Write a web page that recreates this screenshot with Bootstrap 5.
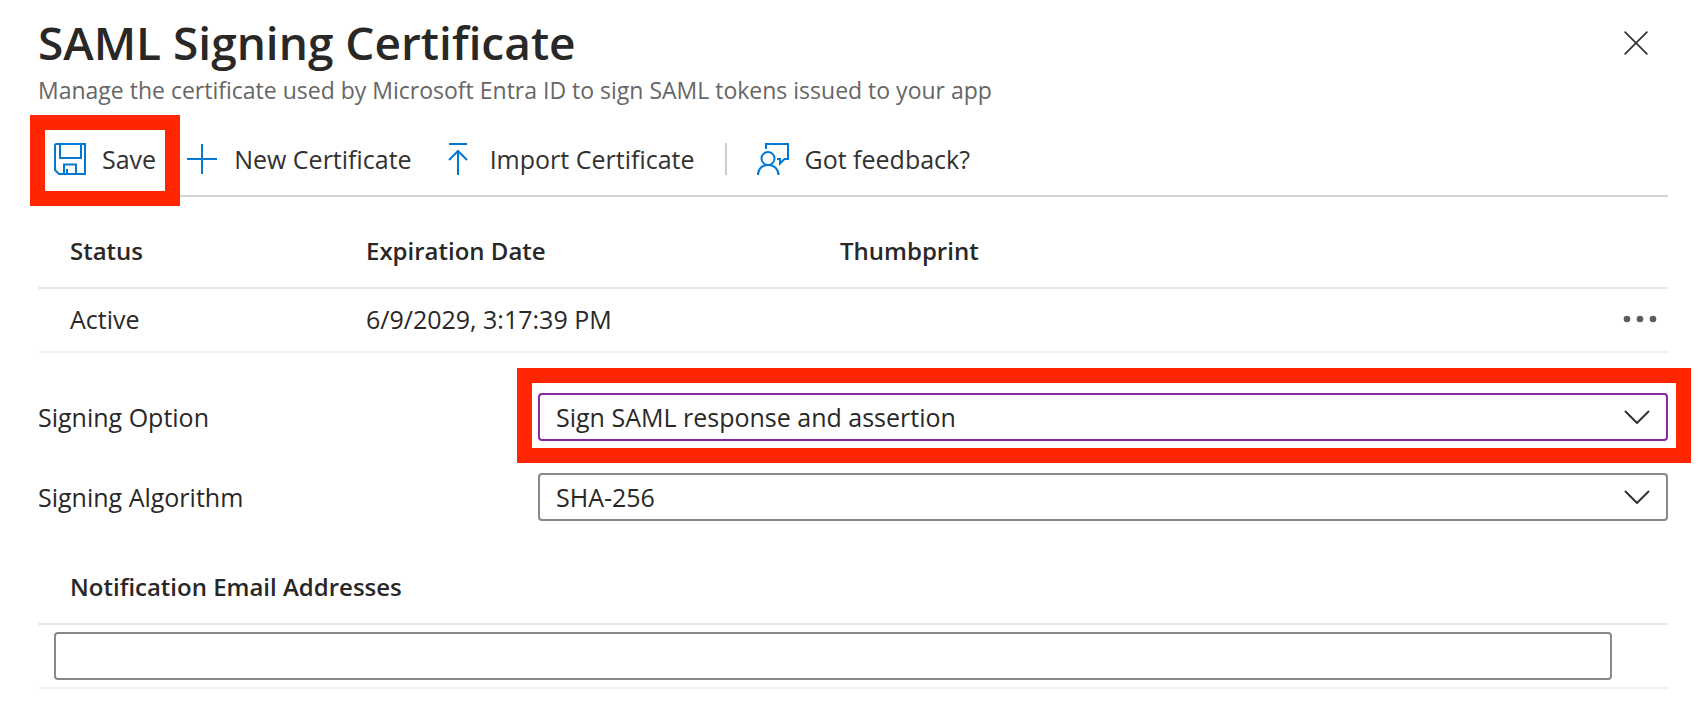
<!DOCTYPE html>
<html lang="en">
<head>
<meta charset="utf-8">
<meta name="viewport" content="width=device-width, initial-scale=1">
<title>SAML Signing Certificate</title>
<link href="https://cdn.jsdelivr.net/npm/bootstrap@5.3.0/dist/css/bootstrap.min.css" rel="stylesheet">
<style>
body { font-family: "Open Sans", "Noto Sans", sans-serif; font-size: 25px; line-height: 32px; color: #292827; background: #fff; }
.panel { padding: 10px 32px 24px 38px; }
.panel-title { font-size: 46px; line-height: 64px; font-weight: 600; }
.panel-subtitle { font-size: 23px; line-height: 32px; color: #666; }
.close-btn { width: 40px; height: 40px; margin: 13px 12px 0 0; }
.toolbar { padding: 37px 16px 20px; gap: 30px; border-bottom: 2px solid #d4d4d4; }
.tool { gap: 16px; color: #323130; font-size: 25px; line-height: 32px; }
.tool svg { width: 32px; height: 32px; flex: none; }
.tool-divider { width: 2px; height: 32px; background: #ccc; }
.callout { position: relative; }
.callout::after { content: ""; position: absolute; border: 15px solid #ff2600; pointer-events: none; }
.callout-tool::after { inset: -28px -24px -31px -24px; }
.callout-field::after { inset: -25px -23px -22px -21px; }
.grid-table { table-layout: fixed; color: inherit; }
.grid-table th, .grid-table td { padding: 0 0 0 32px; vertical-align: middle; color: inherit; box-shadow: none; background: none; }
.grid-table th { height: 91px; padding-bottom: 20px; font-size: 24px; font-weight: 600; border-bottom: 2px solid #e9e9e9; vertical-align: bottom; }
.grid-table td { height: 64px; padding-bottom: 2px; border-bottom: 2px solid #f2f2f2; }
.col-status { width: 296px; }
.col-date { width: 474px; }
.more-btn { width: 48px; height: 32px; margin-right: 4px; }
.field-label { width: 500px; flex: none; }
.field-box { height: 48px; border: 2px solid #8a8886; border-radius: 4px; font-size: 25px; line-height: 32px; padding: 6px 16px; color: #292827; background-color: #fff; }
.form-select.field-box { background-image: url("data:image/svg+xml,%3Csvg xmlns='http://www.w3.org/2000/svg' viewBox='0 0 26 14'%3E%3Cpath d='M1 1l12 12L25 1' fill='none' stroke='%23323130' stroke-width='2'/%3E%3C/svg%3E"); background-size: 26px 14px; background-position: right 16px center; }
.form-select.field-active { border-color: #8c26a3; }
.fields { padding: 40px 0 44px; gap: 32px; }
.email-head { font-size: 24px; line-height: 32px; font-weight: 600; padding: 6px 32px 20px; border-bottom: 2px solid #e9e9e9; }
.email-row { padding: 7px 56px 7px 16px; border-bottom: 2px solid #f2f2f2; }
</style>
</head>
<body>
<main class="panel">
  <header class="d-flex justify-content-between align-items-start">
    <div>
      <h1 class="panel-title mb-0">SAML Signing Certificate</h1>
      <p class="panel-subtitle mb-0">Manage the certificate used by Microsoft Entra ID to sign SAML tokens issued to your app</p>
    </div>
    <button type="button" class="close-btn btn p-0 border-0 d-flex align-items-center justify-content-center" aria-label="Close">
      <svg width="24" height="24" viewBox="0 0 24 24" fill="none" stroke="#323130" stroke-width="1.6"><path d="M.6.6l22.8 22.8M23.4.6L.6 23.4"/></svg>
    </button>
  </header>

  <div class="toolbar d-flex align-items-center" role="toolbar" aria-label="Certificate actions">
    <div class="callout callout-tool">
      <button type="button" class="tool btn p-0 border-0 d-flex align-items-center">
        <svg viewBox="0 0 32 32" fill="none" stroke="#0078d4" stroke-width="2"><path d="M1 2.5Q1 1 2.500 1H31v30H5L1 27zM6 1v14h21V1M10 31v-9.500h12V31M13 31v-5"/></svg>
        <span>Save</span>
      </button>
    </div>
    <button type="button" class="tool btn p-0 border-0 d-flex align-items-center">
      <svg viewBox="0 0 32 32" fill="none" stroke="#0078d4" stroke-width="2"><path d="M16 1v30M1 16h30"/></svg>
      <span>New Certificate</span>
    </button>
    <button type="button" class="tool btn p-0 border-0 d-flex align-items-center">
      <svg viewBox="0 0 32 32" fill="none" stroke="#0078d4" stroke-width="2"><path d="M7 1h18M16 32V8M7 17l9-9 9 9"/></svg>
      <span>Import Certificate</span>
    </button>
    <div class="tool-divider"></div>
    <button type="button" class="tool btn p-0 border-0 d-flex align-items-center">
      <svg viewBox="0 0 32 32" fill="none" stroke="#0078d4" stroke-width="2"><circle cx="11" cy="15.500" r="6.500"/><path d="M1 32c0-6 4-10 10-10s10.500 4 10.500 10M9 6V1h22v15h-3.500L23 20.500V16h-3"/></svg>
      <span>Got feedback?</span>
    </button>
  </div>

  <table class="grid-table table mb-0">
    <colgroup><col class="col-status"><col class="col-date"><col></colgroup>
    <thead><tr><th scope="col">Status</th><th scope="col">Expiration Date</th><th scope="col">Thumbprint</th></tr></thead>
    <tbody>
      <tr>
        <td>Active</td>
        <td>6/9/2029, 3:17:39 PM</td>
        <td>
          <button type="button" class="more-btn btn p-0 border-0 d-flex align-items-center justify-content-center ms-auto" aria-label="More options">
            <svg width="34" height="8" viewBox="0 0 34 8" fill="#5c5c5c"><circle cx="4" cy="4" r="3.300"/><circle cx="17" cy="4" r="3.300"/><circle cx="30" cy="4" r="3.300"/></svg>
          </button>
        </td>
      </tr>
    </tbody>
  </table>

  <form>
    <div class="fields d-flex flex-column">
      <div class="d-flex align-items-center">
        <label class="field-label" for="signing-option">Signing Option</label>
        <div class="callout callout-field flex-grow-1">
          <select class="form-select field-box field-active" id="signing-option">
            <option>Sign SAML response and assertion</option>
            <option>Sign SAML response</option>
            <option>Sign SAML assertion</option>
          </select>
        </div>
      </div>
      <div class="d-flex align-items-center">
        <label class="field-label" for="signing-algorithm">Signing Algorithm</label>
        <div class="flex-grow-1">
          <select class="form-select field-box" id="signing-algorithm">
            <option>SHA-256</option>
            <option>SHA-1</option>
          </select>
        </div>
      </div>
    </div>
    <h2 class="email-head mb-0"><label for="email">Notification Email Addresses</label></h2>
    <div class="email-row">
      <input type="email" class="form-control field-box" id="email">
    </div>
  </form>
</main>
<script src="https://cdn.jsdelivr.net/npm/bootstrap@5.3.0/dist/js/bootstrap.bundle.min.js"></script>
</body>
</html>
